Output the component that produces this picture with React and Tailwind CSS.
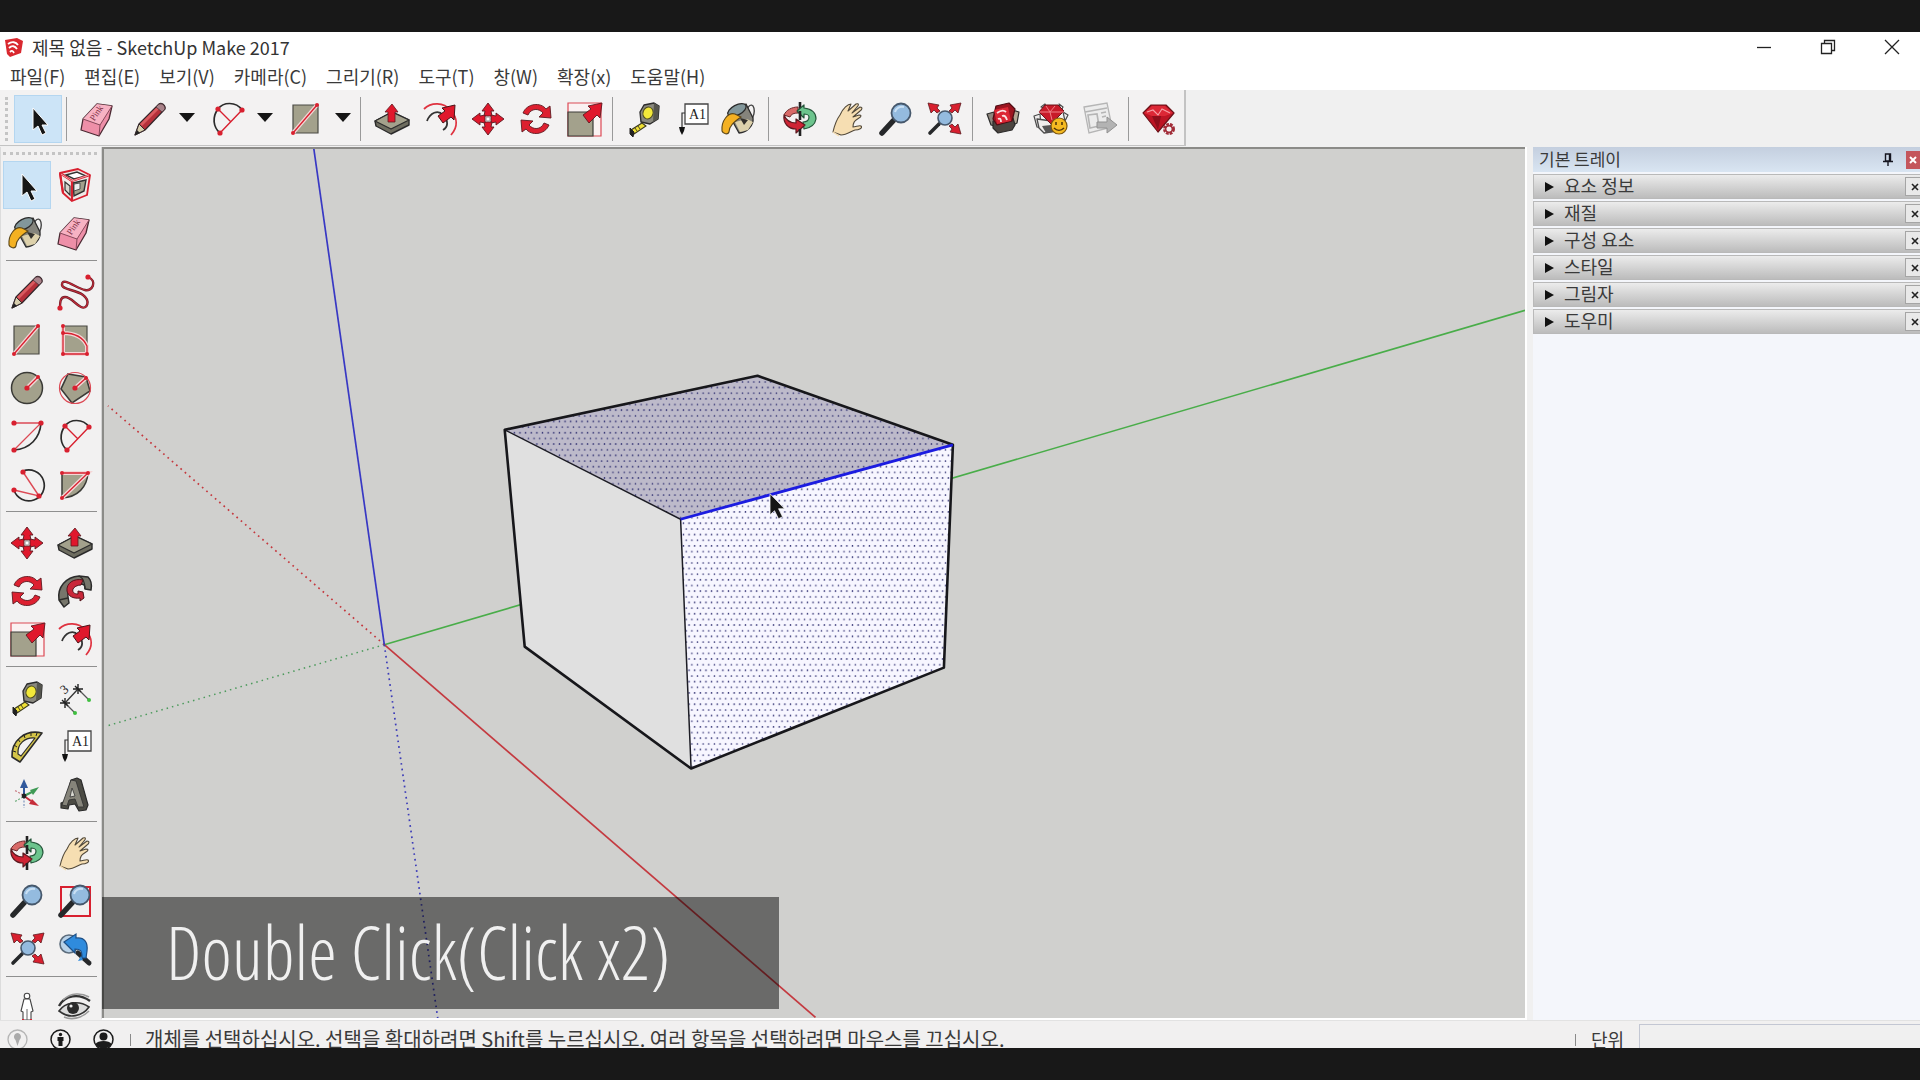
const RED = "#d8202f"
const TAUPE = "#a3a18c"
const INK = "#2b2b2b"

const Icon = ({ children }) => (
  <svg viewBox="0 0 48 48" className="h-12 w-12 shrink-0" fill="none" aria-hidden="true">
    {children}
  </svg>
)

const Node = ({ x, y }) => <circle cx={x} cy={y} r="2.6" fill={RED} />

const Link = ({ d }) => (
  <>
    <path d={d} stroke="#f4d6d6" strokeWidth="4" />
    <path d={d} stroke={RED} strokeWidth="1.3" />
  </>
)

const SelectIcon = () => (
  <Icon>
    <path d="M19 13v22l5-4 4 9 4-2-4-8h6z" fill="#161616" stroke="#fff" strokeWidth="1" />
  </Icon>
)

const EraserIcon = () => (
  <Icon>
    <path d="M23 9l15 2-3 13-10 17L7 35l2-11z" fill="#ee8fa8" stroke="#4b2a33" strokeWidth="1.3" strokeLinejoin="round" />
    <path d="M23 9l15 2-12 19-17-6z" fill="#f7b2c3" />
    <path d="M9 24l17 6-1 11M26 30l12-19" stroke="#87485a" strokeWidth="1" />
    <text x="19" y="26" fontSize="9" fontFamily="Liberation Serif, serif" fill="#7d3045" transform="rotate(-56 20 25)">
      Pink
    </text>
  </Icon>
)

const PencilIcon = () => (
  <Icon>
    <path d="M9 40l4-11L33 9c2-2 7 1 6 5L19 35z" fill="#b5303a" stroke="#33262a" strokeWidth="1.2" strokeLinejoin="round" />
    <path d="M14 29L33 10l2 2-19 19z" fill="#d95a5f" />
    <path d="M9 40l4-11 6 6z" fill="#d8cfae" stroke="#33262a" strokeWidth="1" />
    <path d="M9 40l2-5 3 3z" fill="#222" />
    <path d="M31 11c3-4 8-2 8 3l-3 3-6-5z" fill="#a9838a" stroke="#4a3439" strokeWidth="0.8" />
  </Icon>
)

const ArcTwoIcon = () => (
  <Icon>
    <path d="M38 15C32 6 19 7 14 14C8 22 9 32 16 38" stroke={INK} strokeWidth="1.7" />
    <path d="M38 15L16 38M14 14l13 13" stroke={RED} strokeWidth="1.4" />
    <Node x={14} y={14} />
    <Node x={38} y={15} />
    <Node x={16} y={38} />
  </Icon>
)

const RectIcon = () => (
  <Icon>
    <path d="M11 10h25v28H11z" fill={TAUPE} stroke="#4a4a44" strokeWidth="1.2" />
    <Link d="M11 38L35 10" />
    <circle cx="11" cy="38" r="2" fill={RED} />
    <circle cx="35" cy="10" r="2" fill={RED} />
  </Icon>
)

const PushIcon = () => (
  <Icon>
    <path d="M7 26l17-9 17 8v5L23 39 8 31z" fill="#6e6d60" stroke={INK} strokeWidth="1.4" strokeLinejoin="round" />
    <path d="M7 26l17-9 17 8-18 9z" fill={TAUPE} stroke={INK} strokeWidth="1.2" strokeLinejoin="round" />
    <path d="M24 9l6 8h-3v10h-7V17h-3z" fill="#e0182c" stroke="#5d1a20" strokeWidth="0.8" />
  </Icon>
)

const OffsetIcon = () => (
  <Icon>
    <path d="M8 14C15 7 28 7 34 15C42 23 42 32 35 40" stroke="#df3340" strokeWidth="1.8" />
    <path d="M11 26C14 18 22 14 27 20C33 26 32 32 27 35" stroke="#333" strokeWidth="1.8" />
    <path d="M39 10l-13 3 3 3-7 5 5 7 8-6 3 3z" fill="#e0182c" stroke="#4b1419" strokeWidth="1" />
  </Icon>
)

const MoveIcon = () => (
  <Icon>
    {[0, 90, 180, 270].map((angle) => (
      <path
        key={angle}
        transform={`rotate(${angle} 24 24)`}
        d="M24 8l6 8h-3l1 5h-8l1-5h-3z"
        fill="#e0182c"
        stroke="#5d1a20"
        strokeWidth="0.9"
      />
    ))}
    <circle cx="24" cy="24" r="2" fill="#fff" stroke="#777" strokeWidth="0.6" />
  </Icon>
)

const RotateIcon = () => (
  <Icon>
    {[0, 180].map((angle) => (
      <path
        key={angle}
        transform={`rotate(${angle} 24 24)`}
        d="M11 18C15 8 29 7 34 14l4-3 1 12-12-1 4-4C27 13 19 13 16 20z"
        fill="#dd2030"
        stroke="#5d1a20"
        strokeWidth="0.9"
        strokeLinejoin="round"
      />
    ))}
  </Icon>
)

const ScaleIcon = () => (
  <Icon>
    <path d="M8 8h33v33H8z" fill="#faf2f2" stroke="#dc4a55" strokeWidth="1.2" />
    <path d="M8 17h25v24H8z" fill={TAUPE} stroke="#3c3c38" strokeWidth="1.2" />
    <path d="M42 8l-14 3 3 3-8 6 6 8 8-8 3 3z" fill="#e0182c" stroke="#5d1a20" strokeWidth="0.9" />
  </Icon>
)

const TapeIcon = () => (
  <Icon>
    <path d="M20 17l4-7 10-2 5 3-1 13-8 5-9-2z" fill="#8a897f" stroke={INK} strokeWidth="1.4" strokeLinejoin="round" />
    <path d="M34 8l5 3-1 13-5 3z" fill="#55554e" />
    <ellipse cx="28" cy="18" rx="5" ry="6" fill="#f2e83a" stroke="#4e4c1e" strokeWidth="1" transform="rotate(20 28 18)" />
    <path d="M22 28l4 3-12 8-3-4z" fill="#efe034" stroke="#3d3b1c" strokeWidth="1.1" />
    <path d="M10 33l4 4-1 5-3-3z" fill="#222" stroke="#222" />
    <path d="M15 33l2 3M18 31l2 3" stroke="#222" strokeWidth="0.8" />
  </Icon>
)

const TextIcon = () => (
  <Icon>
    <path d="M17 9h23v20H17z" fill="#fff" stroke="#444" strokeWidth="1.3" />
    <path d="M17 18h-3v15" stroke="#333" strokeWidth="1.2" />
    <path d="M11 32h6l-1 4-2 4-2-4z" fill="#111" />
    <text x="21" y="24" fontSize="14" fontFamily="Liberation Serif, serif" fill="#222">
      A1
    </text>
  </Icon>
)

const PaintIcon = () => (
  <Icon>
    <ellipse cx="34" cy="18" rx="4" ry="8" stroke="#444" strokeWidth="1.4" transform="rotate(12 34 18)" />
    <path d="M12 18l18-9 7 14c1 7-6 15-14 15z" fill="#85847c" stroke={INK} strokeWidth="1.3" strokeLinejoin="round" />
    <path d="M19 27l12-3 6 3-5 8-8 2z" fill="#ddd1ab" />
    <path d="M24 23l8 2-4 5z" fill="#33302c" />
    <ellipse cx="21" cy="15" rx="10" ry="5" fill="#82979b" stroke={INK} strokeWidth="1.3" transform="rotate(-28 21 15)" />
    <path d="M19 19C12 17 5 26 6 36c1 3 6 4 7 1 0-6 5-10 12-15z" fill="#f4b122" stroke="#5a461a" strokeWidth="1.1" />
  </Icon>
)

const OrbitIcon = () => (
  <Icon>
    <path d="M24 7v12" stroke="#222" strokeWidth="2.6" />
    <path d="M8 20c2-5 8-8 14-8v6c-4 0-7 1-8 4z" fill="#d86a68" stroke="#6b2b2c" strokeWidth="1" />
    <path d="M21 16l7-6v3c8 1 12 5 12 11-1 6-6 9-12 10l-1-7c4 0 6-2 6-5 0-2-3-3-5-3v4z" fill="#6cc48d" stroke="#24563a" strokeWidth="1.2" strokeLinejoin="round" />
    <path d="M8 20c-1 8 4 14 12 14v4l9-8-9-6v4c-6 0-10-3-12-8z" fill="#cf2434" stroke="#5d1a20" strokeWidth="1.2" strokeLinejoin="round" />
    <path d="M24 16v9M24 34v7" stroke="#222" strokeWidth="2.6" />
  </Icon>
)

const HandIcon = () => (
  <Icon>
    <path
      d="M9 37c2-9 4-13 7-17C19 13 24 9 27 9l-3 7 8-7c3-1 3 1 1 3l-5 6 8-6c3 0 2 3 0 4l-7 6 6-2c3 0 2 2 0 3-5 3-6 5-6 9 3 0 6-2 8-1 2 2-2 4-6 4-4 1-8 5-14 5z"
      fill="#f6deb2"
      stroke="#52493a"
      strokeWidth="1.1"
      strokeLinejoin="round"
    />
    <path d="M9 37l6 4" stroke="#f6deb2" strokeWidth="1.5" />
  </Icon>
)

const ZoomGlass = () => (
  <>
    <path d="M21 26L10 38" stroke="#26282a" strokeWidth="5.5" strokeLinecap="round" />
    <circle cx="29" cy="18" r="9.5" fill="#94bbdf" stroke="#46586c" strokeWidth="1.8" />
    <path d="M23 17c1-4 5-6 9-5" stroke="#c9e0f4" strokeWidth="2" />
  </>
)

const ZoomIcon = () => (
  <Icon>
    <ZoomGlass />
  </Icon>
)

const ZoomWindowIcon = () => (
  <Icon>
    <path d="M10 10h29v29H10z" stroke={RED} strokeWidth="2" />
    <ZoomGlass />
  </Icon>
)

const ExtentsIcon = () => (
  <Icon>
    <path d="M19 29L10 38" stroke="#26282a" strokeWidth="3.6" strokeLinecap="round" />
    <circle cx="25" cy="23" r="7" fill="#94bbdf" stroke="#46586c" strokeWidth="1.6" />
    <path
      d="M8 8l11 2-2 3 3 3-3 2-3-3-3 3zM41 8l-11 2 2 3-3 3 3 2 3-3 3 3zM41 39l-11-2 2-3-3-3 3-2 3 3 3-3z"
      fill="#d8202f"
      stroke="#5d1a20"
      strokeWidth="0.8"
    />
  </Icon>
)

const PreviousIcon = () => (
  <Icon>
    <circle cx="18" cy="19" r="9" fill="#b9d2e8" stroke="#5c6c7c" strokeWidth="1.6" />
    <path d="M27 28l11 10" stroke="#26282a" strokeWidth="5" strokeLinecap="round" />
    <path d="M13 17l12-8v4c9-1 12 5 11 13l-1 7h-4c0-7-1-9-7-9v4z" fill="#2f8bdd" stroke="#1d4f86" strokeWidth="1.2" />
    <path d="M27 36l3-5 2 4z" fill="#2f8bdd" />
  </Icon>
)

const WarehouseIcon = () => (
  <Icon>
    <path d="M7 19l7-2 4 15-7-2z" fill="#8f877e" stroke={INK} strokeWidth="1.2" strokeLinejoin="round" />
    <path d="M32 15l7 2-2 11-6 3z" fill="#b3a795" stroke={INK} strokeWidth="1.2" strokeLinejoin="round" />
    <path d="M13 26l20-3 2 7-3 5-14 3-5-5z" fill="#4b4540" stroke={INK} strokeWidth="1.2" strokeLinejoin="round" />
    <path d="M16 11l13-3 6 6-3 12-15 4-4-6z" fill="#9c1420" stroke="#4f0d14" strokeWidth="1.2" strokeLinejoin="round" />
    <path d="M14 15l14-3 3 14-14 3z" fill="#dc2735" />
    <path d="M17 18c4-3 7-3 9-1M22 21c3-1 4 1 5 4M18 24c2-1 3 0 3 3" stroke="#fbe4e5" strokeWidth="1.8" />
  </Icon>
)

const ExtensionStoreIcon = () => (
  <Icon>
    <path d="M6 21l6-2 1 14-4-1zM13 12l4-3 2 5zM31 9l4 3-2 4zM35 17l5 3-3 6z" fill="#efeded" stroke="#4c4c4c" strokeWidth="1.2" strokeLinejoin="round" />
    <path d="M9 24l22 3-2 9-13 2-5-5z" fill="#efeded" stroke="#4c4c4c" strokeWidth="1.3" strokeLinejoin="round" />
    <path d="M14 31l4 7 7-1-2-7z" fill="#555" />
    <path d="M11 17l6-7h13l6 6-13 13z" fill="#c81a29" stroke="#6b1219" strokeWidth="1" />
    <path d="M11 17h25M18 11l4 6 5-6M22 17l2 8" stroke="#f08087" strokeWidth="1" />
    <circle cx="31" cy="31" r="8" fill="#f5ba21" stroke="#7a5510" strokeWidth="1.2" />
    <path d="M28 27v3M34 27v3M26 33c3 3 7 3 10 0" stroke="#4a3208" strokeWidth="1.5" />
  </Icon>
)

const LayoutIcon = () => (
  <Icon>
    <path d="M8 12l23-4 5 24-23 6z" fill="#ececec" stroke="#b5b5b5" strokeWidth="1.3" />
    <path d="M9 17l22-4M12 20l9-1 2 12-9 2zM25 18l5-1M26 22l4-1" stroke="#b5b5b5" strokeWidth="1.6" />
    <path d="M21 27h10v-5l10 8-10 8v-5H21z" fill="#b3b3b3" stroke="#929292" strokeWidth="1" />
  </Icon>
)

const RubyIcon = () => (
  <Icon>
    <path d="M7 18l8-8h15l8 8-16 19z" fill="#bd1524" stroke="#6b1219" strokeWidth="1.2" strokeLinejoin="round" />
    <path d="M8 18l8-7h13l8 7-8 3H16z" fill="#dc2836" />
    <path d="M16 21l6 14 3-14z" fill="#8e0f1b" />
    <path d="M11 17l6-2 5 5 4-6 8 4" stroke="#f6a0a5" strokeWidth="1.1" />
    <circle cx="33" cy="34" r="4.5" fill="#f2f1f1" stroke="#a22d39" strokeWidth="3" strokeDasharray="2.6 1" />
    <circle cx="33" cy="34" r="3.4" stroke="#a22d39" strokeWidth="1.6" />
  </Icon>
)

const ComponentIcon = () => (
  <Icon>
    <path d="M9 12l18-4 12 6-3 20-15 6-9-8z" fill="#efebe8" stroke={RED} strokeWidth="1.8" strokeLinejoin="round" />
    <path d="M15 14l11-3 9 4-12 3z" fill="#fff" stroke="#333" strokeWidth="1.4" />
    <path d="M14 21l5 4v9l-5-5z" fill="#d9d5ce" stroke="#333" strokeWidth="1.2" />
    <path d="M22 22l13-3-2 11-10 5z" fill="#a3a18c" stroke="#333" strokeWidth="1.4" />
    <path d="M23 23l6-1v6l-6 2z" fill="#eee" stroke="#444" strokeWidth="0.9" />
    <path d="M9 12l12 8 18-6M21 20v20M9 12l3 20" stroke={RED} strokeWidth="2.2" strokeLinejoin="round" />
    <path d="M10 13l11 7 17-6" stroke="#fff" strokeWidth="0.6" />
  </Icon>
)

const FreehandIcon = () => (
  <Icon>
    <path
      d="M37 9C47 13 41 24 34 22C25 20 12 9 11 16C10 22 24 21 32 27C40 33 36 42 30 39C24 36 20 29 14 29C9 29 9 35 9 40"
      stroke="#6a1f28"
      strokeWidth="2.4"
    />
    <path
      d="M37 9C47 13 41 24 34 22C25 20 12 9 11 16C10 22 24 21 32 27C40 33 36 42 30 39C24 36 20 29 14 29C9 29 9 35 9 40"
      stroke="#c02a38"
      strokeWidth="1.2"
    />
    <Node x={37} y={9} />
    <Node x={9} y={40} />
  </Icon>
)

const RotatedRectIcon = () => (
  <Icon>
    <path d="M12 10h24v28H12z" fill={TAUPE} stroke="#4a4a44" strokeWidth="1.2" />
    <Link d="M12 10v28h24V30C32 21 24 17 12 17" />
    <circle cx="12" cy="10" r="2" fill={RED} />
    <circle cx="12" cy="17" r="2" fill={RED} />
    <circle cx="12" cy="38" r="2" fill={RED} />
    <circle cx="36" cy="38" r="2" fill={RED} />
  </Icon>
)

const CircleIcon = () => (
  <Icon>
    <circle cx="24" cy="24" r="15.5" fill={TAUPE} stroke="#3a3a36" strokeWidth="1.5" />
    <Link d="M24 24L35 13" />
    <Node x={24} y={24} />
    <circle cx="35" cy="13" r="2" fill={RED} />
  </Icon>
)

const PolygonIcon = () => (
  <Icon>
    <path d="M17 10l18 3 4 14-18 12-11-14z" fill={TAUPE} stroke="#3a3a36" strokeWidth="1.6" />
    <circle cx="24" cy="24" r="15.5" stroke="#dc4a55" strokeWidth="1.2" />
    <Link d="M24 24L35 14" />
    <Node x={24} y={24} />
    <circle cx="35" cy="14" r="2" fill={RED} />
  </Icon>
)

const ArcIcon = () => (
  <Icon>
    <path d="M38 11C37 26 27 37 11 38" stroke={INK} strokeWidth="1.7" />
    <path d="M11 11h27L11 38" stroke="#dc4a55" strokeWidth="1.3" />
    <Node x={11} y={11} />
    <Node x={38} y={11} />
    <Node x={11} y={38} />
  </Icon>
)

const ArcThreeIcon = () => (
  <Icon>
    <path d="M20 11A15.5 15.5 0 1 1 11 30" stroke={INK} strokeWidth="1.7" />
    <path d="M20 12l16 24-25-6" stroke="#dc4a55" strokeWidth="1.4" />
    <Node x={20} y={12} />
    <Node x={11} y={30} />
    <Node x={36} y={36} />
  </Icon>
)

const PieIcon = () => (
  <Icon>
    <path d="M11 13h26C36 27 27 37 11 38z" fill={TAUPE} stroke="#3a3a36" strokeWidth="1.5" />
    <Link d="M11 13h26L11 38" />
    <circle cx="11" cy="13" r="2" fill={RED} />
    <circle cx="37" cy="13" r="2" fill={RED} />
    <circle cx="11" cy="38" r="2" fill={RED} />
  </Icon>
)

const FollowIcon = () => (
  <Icon>
    <path
      d="M8 33C6 20 15 10 28 9l9 1c3 3 4 8 3 13l-6-1c0-4-1-5-5-5-8 0-13 6-12 13l1 6-5 4z"
      fill="#77766b"
      stroke={INK}
      strokeWidth="1.5"
      strokeLinejoin="round"
    />
    <path d="M28 9c4 2 6 6 6 13M8 33l9-2" stroke="#2e2e2a" strokeWidth="1.3" />
    <path
      d="M32 13C23 11 15 16 16 24c1 5 6 8 13 7v3l4-3-1-6-5-1v3c-4 0-6-2-5-5 1-2 4-4 8-4z"
      fill="#c9283a"
      stroke="#53141b"
      strokeWidth="1"
      strokeLinejoin="round"
    />
  </Icon>
)

const DimensionIcon = () => (
  <Icon>
    <path d="M14 29L27 15" stroke="#333" strokeWidth="1.3" />
    <path d="M27 15l11 11M14 29l10 10" stroke="#555" strokeWidth="1.3" />
    <path d="M22 15h10M27 10v10M24 12l6 6M9 29h10M14 24v10M11 26l6 6" stroke="#222" strokeWidth="1.4" />
    <circle cx="38" cy="26" r="2" fill="#3fbf3f" />
    <circle cx="24" cy="39" r="2" fill="#3fbf3f" />
    <text x="10" y="19" fontSize="13" fontFamily="Liberation Serif, serif" fill="#222" transform="rotate(-40 14 15)">
      3
    </text>
  </Icon>
)

const ProtractorIcon = () => (
  <Icon>
    <path d="M39 11C22 7 8 19 9 35l8 5z" fill="#d5c548" stroke={INK} strokeWidth="1.6" strokeLinejoin="round" />
    <path d="M32 16C22 15 14 22 15 32l3 2z" fill="#f2f1f1" stroke={INK} strokeWidth="1.2" strokeLinejoin="round" />
    <path d="M10 29l3 1M11 23l3 2M15 17l2 3M21 13l1 3M28 11v3M34 11l-1 3" stroke="#222" strokeWidth="1" />
  </Icon>
)

const AxesIcon = () => (
  <Icon>
    <path d="M21 26V16" stroke="#31599c" strokeWidth="2" />
    <path d="M21 9l4 9h-8z" fill="#31599c" />
    <path d="M21 26l8-4" stroke="#3f9a55" strokeWidth="2" />
    <path d="M36 17l-6 8-3-5z" fill="#3f9a55" />
    <path d="M21 26l7 5" stroke="#c62d3a" strokeWidth="2" />
    <path d="M36 36l-10-2 3-5z" fill="#c62d3a" />
    <path d="M21 27v11" stroke="#7f96bd" strokeWidth="1.2" strokeDasharray="2 1.5" />
    <path d="M20 27l-9 5" stroke="#6fae7d" strokeWidth="1.2" strokeDasharray="2 1.5" />
    <path d="M20 25l-9-5" stroke="#c97a82" strokeWidth="1.2" strokeDasharray="2 1.5" />
    <circle cx="21" cy="26" r="2.4" fill="#222" />
  </Icon>
)

const SolidTextIcon = () => (
  <Icon>
    <path
      d="M20 10l6-2 4 2 7 25-2 5-7 1-4-7-6 1-1 4-7-1v-5l5-2z"
      fill="#4c4b44"
      stroke={INK}
      strokeWidth="1.2"
      strokeLinejoin="round"
    />
    <path d="M20 10l5 1 8 26h-6l-3-8-6 1-2 6-5-1z" fill="#86847a" stroke="#333" strokeWidth="0.9" />
    <path d="M21 18l3 8-5 1z" fill="#d8d7d0" stroke="#333" strokeWidth="0.8" />
  </Icon>
)

const PersonIcon = () => (
  <Icon>
    <circle cx="24" cy="12" r="2.8" fill="#fff" stroke="#444" strokeWidth="1.1" />
    <path d="M21 15h6l3 12-2 1v8h-8v-8l-2-1z" fill="#fff" stroke="#444" strokeWidth="1.1" strokeLinejoin="round" />
    <path d="M24 25v11" stroke="#666" />
    <path d="M20 35v2M28 35v2" stroke={RED} strokeWidth="2" />
  </Icon>
)

const LookIcon = () => (
  <Icon>
    <path d="M8 22C14 11 28 9 39 17" stroke="#333" strokeWidth="2.4" />
    <path d="M12 16C20 8 31 9 38 13" stroke="#999" strokeWidth="1.6" />
    <path d="M8 27C14 18 28 16 38 23C31 33 18 34 11 29z" fill="#dcdcdc" stroke="#333" strokeWidth="1.6" />
    <circle cx="22" cy="24" r="6" fill="#2b2b2b" />
    <circle cx="20" cy="22" r="1.6" fill="#eee" />
    <path d="M13 33c7 3 17 2 25-6" stroke="#999" strokeWidth="1.6" />
  </Icon>
)

const MENUS = ["파일(F)", "편집(E)", "보기(V)", "카메라(C)", "그리기(R)", "도구(T)", "창(W)", "확장(x)", "도움말(H)"]

const TRAY_PANELS = ["요소 정보", "재질", "구성 요소", "스타일", "그림자", "도우미"]

const SPLIT_TOOLS = [
  ["연필", PencilIcon],
  ["호", ArcTwoIcon],
  ["직사각형", RectIcon],
]

const TOP_GROUPS = [
  [
    ["밀기/끌기", PushIcon],
    ["오프셋", OffsetIcon],
    ["이동", MoveIcon],
    ["회전", RotateIcon],
    ["배율", ScaleIcon],
  ],
  [
    ["줄자", TapeIcon],
    ["텍스트", TextIcon],
    ["페인트통", PaintIcon],
  ],
  [
    ["궤도", OrbitIcon],
    ["이동 보기", HandIcon],
    ["확대/축소", ZoomIcon],
    ["범위 확대", ExtentsIcon],
  ],
  [
    ["3D Warehouse", WarehouseIcon],
    ["Extension Warehouse", ExtensionStoreIcon],
    ["LayOut", LayoutIcon],
  ],
  [["확장 관리자", RubyIcon]],
]

const SIDE_GROUPS = [
  [
    ["선택", SelectIcon],
    ["구성 요소 만들기", ComponentIcon],
    ["페인트통", PaintIcon],
    ["지우개", EraserIcon],
  ],
  [
    ["연필", PencilIcon],
    ["자유곡선", FreehandIcon],
    ["직사각형", RectIcon],
    ["회전된 직사각형", RotatedRectIcon],
    ["원", CircleIcon],
    ["다각형", PolygonIcon],
    ["호", ArcIcon],
    ["2점 호", ArcTwoIcon],
    ["3점 호", ArcThreeIcon],
    ["파이", PieIcon],
  ],
  [
    ["이동", MoveIcon],
    ["밀기/끌기", PushIcon],
    ["회전", RotateIcon],
    ["따라가기", FollowIcon],
    ["배율", ScaleIcon],
    ["오프셋", OffsetIcon],
  ],
  [
    ["줄자", TapeIcon],
    ["치수", DimensionIcon],
    ["각도기", ProtractorIcon],
    ["텍스트", TextIcon],
    ["축", AxesIcon],
    ["3D 텍스트", SolidTextIcon],
  ],
  [
    ["궤도", OrbitIcon],
    ["이동 보기", HandIcon],
    ["확대/축소", ZoomIcon],
    ["창 확대", ZoomWindowIcon],
    ["범위 확대", ExtentsIcon],
    ["이전", PreviousIcon],
  ],
  [
    ["카메라 배치", PersonIcon],
    ["둘러보기", LookIcon],
  ],
]

const ToolButton = ({ label, icon: Glyph, active }) => (
  <button
    type="button"
    aria-label={label}
    aria-pressed={active}
    className={
      active
        ? "h-12 w-12 shrink-0 bg-[#cce4f7] outline outline-1 -outline-offset-1 outline-[#b4d6f0]"
        : "h-12 w-12 shrink-0 hover:bg-[#e2eef8]"
    }
  >
    <Glyph />
  </button>
)

const Divider = () => <div className="mr-[7px] ml-1 h-11 w-px shrink-0 bg-[#9a9a9a]" />

const TitleBar = () => (
  <header className="bg-white">
    <div className="flex h-[31px] items-center pb-[2px]">
      <svg viewBox="0 0 20 20" className="mr-2 ml-1 h-5 w-5" aria-hidden="true">
        <path d="M1 3l12-2 6 3-2 12-11 4-3-3z" fill="#d9282f" />
        <path d="M4 7c4-3 8-2 10 1M5 11c3-3 6-2 8 1M6 15c2-2 3-1 4 1" stroke="#fff" strokeWidth="1.8" fill="none" />
      </svg>
      <h1 className="text-[18px] leading-6 text-[#333]">제목 없음 - SketchUp Make 2017</h1>
      <div className="ml-auto flex gap-2">
        <button type="button" aria-label="최소화" className="flex h-7 w-14 items-center justify-center">
          <svg viewBox="0 0 16 16" className="h-4 w-4">
            <path d="M1 8.5h14" stroke="#222" strokeWidth="1.3" />
          </svg>
        </button>
        <button type="button" aria-label="이전 크기로" className="flex h-7 w-14 items-center justify-center">
          <svg viewBox="0 0 16 16" className="h-4 w-4" fill="none" stroke="#222" strokeWidth="1.3">
            <path d="M1.5 4.5h10v10h-10zM4.5 4.5v-3h10v10h-3" />
          </svg>
        </button>
        <button type="button" aria-label="닫기" className="flex h-7 w-14 items-center justify-center">
          <svg viewBox="0 0 16 16" className="h-4 w-4" stroke="#222" strokeWidth="1.3">
            <path d="M1 1l14 14M15 1L1 15" />
          </svg>
        </button>
      </div>
    </div>
    <nav className="flex h-[27px] items-center gap-[19px] pb-px pl-[10px]">
      {MENUS.map((menu) => (
        <button key={menu} type="button" className="text-[18px] leading-6 whitespace-nowrap text-[#3a3a3a]">
          {menu}
        </button>
      ))}
    </nav>
  </header>
)

const TopToolbar = () => (
  <div className="flex h-[57px] bg-[#f0f0f0] pb-px">
    <div className="flex items-center border-r-2 border-b border-[#c3c3c3] bg-[#f3f2f2] pt-[3px]">
      <div className="mr-[6px] ml-[5px] h-11 border-l-3 border-dotted border-[#c4c4c4]" />
      <ToolButton label="선택" icon={SelectIcon} active />
      <Divider />
      <div className="flex gap-1">
        <ToolButton label="지우개" icon={EraserIcon} />
        {SPLIT_TOOLS.map(([label, icon]) => (
          <div key={label} className="flex">
            <ToolButton label={label} icon={icon} />
            <button type="button" aria-label={`${label} 더 보기`} className="flex w-[26px] items-center justify-center pb-1">
              <svg viewBox="0 0 16 9" className="h-[9px] w-4" aria-hidden="true">
                <path d="M0 0h16L8 9z" fill="#151515" />
              </svg>
            </button>
          </div>
        ))}
      </div>
      {TOP_GROUPS.map((group, i) => (
        <div key={i} className="flex items-center">
          <Divider />
          {group.map(([label, icon]) => (
            <ToolButton key={label} label={label} icon={icon} />
          ))}
        </div>
      ))}
    </div>
  </div>
)

const SideToolbar = () => (
  <aside className="min-h-0 w-[101px] shrink-0 overflow-hidden border-l border-[#dcdcdc] bg-[#f2f1f1] pl-[2px]">
    <div className="mt-[5px] mr-1 mb-[6px] border-t-3 border-dotted border-[#c4c4c4]" />
    {SIDE_GROUPS.map((group, i) => (
      <div key={i}>
        {i > 0 && <div className="mt-[3px] mr-1 mb-[7px] ml-[3px] h-px bg-[#8f8f8f]" />}
        <div className="grid w-24 grid-cols-2">
          {group.map(([label, icon]) => (
            <ToolButton key={label} label={label} icon={icon} active={label === "선택"} />
          ))}
        </div>
      </div>
    ))}
  </aside>
)

const Viewport = () => (
  <main className="relative min-w-0 flex-1 border-t-2 border-l-2 border-[#8b8b88] bg-[#d0d0ce]">
    <svg viewBox="104 149 1422 870" preserveAspectRatio="xMinYMin slice" className="absolute inset-0 h-full w-full" fill="none">
      <defs>
        <pattern id="dots" width="5.64" height="11.32" patternUnits="userSpaceOnUse">
          <circle cx="1.4" cy="2.8" r="0.8" fill="#25256a" />
          <circle cx="4.2" cy="8.5" r="0.8" fill="#25256a" />
        </pattern>
      </defs>

      {/* Axes */}
      <path d="M384.5 645L1526 310.5" stroke="#49ad49" strokeWidth="1.6" />
      <path d="M384.5 645L108 726" stroke="#4c9a5c" strokeWidth="1.5" strokeDasharray="1.5 4" />
      <path d="M384.5 645L816 1018" stroke="#c43a40" strokeWidth="1.7" />
      <path d="M384.5 645L108 406" stroke="#c4383e" strokeWidth="1.7" strokeDasharray="1.7 4" />
      <path d="M384.5 645L314 149" stroke="#3838c4" strokeWidth="1.7" />
      <path d="M384.5 645L438 1019" stroke="#3c3cb8" strokeWidth="1.7" strokeDasharray="1.7 4" />

      {/* Box */}
      <path d="M505 430L681 519.5L691.5 769L525 647z" fill="#e0e0e0" />
      <path d="M505 430L758 376L953.5 445L681 519.5z" fill="#bdbaca" />
      <path d="M681 519.5L953.5 445L944.5 668L691.5 769z" fill="#f7f6ff" />
      <path d="M505 430L758 376L953.5 445L944.5 668L691.5 769L681 519.5z" fill="url(#dots)" />
      <path d="M505 430L681 519.5L691.5 769" stroke="#1c1c24" strokeWidth="1.5" />
      <path
        d="M505 430L758 376L953.5 445L944.5 668L691.5 769L525 647z"
        stroke="#17171b"
        strokeWidth="2.6"
        strokeLinejoin="round"
      />
      <path d="M681 519.5L953.5 445" stroke="#1c1ce0" strokeWidth="2.8" />

      {/* Pointer */}
      <path d="M770.5 494v21l4.5-4 4 8 4-2-4-8h6z" fill="#161616" stroke="#fff" strokeWidth="0.7" />
    </svg>
    <div className="absolute bottom-[9px] -left-[2px] flex h-28 w-[677px] max-w-full items-center bg-black/49 pb-1 pl-16">
      <p className="font-['Open_Sans_Condensed_Light','Roboto_Condensed','Liberation_Sans_Narrow',sans-serif] text-[73px] leading-none font-light whitespace-nowrap text-[#f0f0f0]">
        Double Click(Click x2)
      </p>
    </div>
  </main>
)

const Tray = () => (
  <aside className="flex w-[387px] shrink-0 flex-col overflow-hidden bg-[#f4f6fb]">
    <div className="mb-[2px] flex h-[25px] shrink-0 items-center bg-linear-to-b from-[#c4cfdf] to-[#d9e5f2] pl-[6px]">
      <h2 className="pb-[2px] text-[17px] leading-[22px] text-[#3a3a3a]">기본 트레이</h2>
      <button type="button" aria-label="고정" className="mr-3 ml-auto">
        <svg viewBox="0 0 12 14" className="h-[14px] w-3" fill="none" stroke="#15151f" strokeWidth="1.4">
          <path d="M3.5 1h5v7h-5zM1 8.5h10M6 8.5V13M7.5 1v7" />
        </svg>
      </button>
      <button type="button" aria-label="트레이 닫기" className="flex h-[18px] w-[14px] items-center justify-center bg-[#c4565c]">
        <svg viewBox="0 0 8 8" className="h-2 w-2" stroke="#fff" strokeWidth="2">
          <path d="M1 1l6 6M7 1L1 7" />
        </svg>
      </button>
    </div>
    <div className="flex flex-col gap-[2px]">
      {TRAY_PANELS.map((panel) => (
        <div
          key={panel}
          className="flex h-[25px] items-center border border-r-0 border-[#b9b9b9] bg-linear-to-b from-[#ececec] to-[#bcbcbc]"
        >
          <button type="button" className="flex flex-1 items-center gap-[10px] pl-[11px] text-[18px] leading-6 text-[#3a3a3a]">
            <svg viewBox="0 0 9 10" className="h-[10px] w-[9px]" aria-hidden="true">
              <path d="M0 0l9 5-9 5z" fill="#111" />
            </svg>
            <span className="pb-1">{panel}</span>
          </button>
          <button
            type="button"
            aria-label={`${panel} 닫기`}
            className="flex h-[19px] w-[15px] items-center justify-center border border-r-0 border-[#a5a5a5] bg-[#e9e9e9] pl-1"
          >
            <svg viewBox="0 0 8 8" className="h-2 w-2" stroke="#222" strokeWidth="1.6">
              <path d="M1 1l6 6M7 1L1 7" />
            </svg>
          </button>
        </div>
      ))}
    </div>
  </aside>
)

const StatusBar = () => (
  <footer className="flex h-7 shrink-0 items-start overflow-hidden border-t border-[#e2e2e2] bg-[#f1f0f0]">
    <div className="flex shrink-0 gap-[22px] pt-2 pl-[7px]">
      <svg viewBox="0 0 21 21" className="h-[21px] w-[21px]" fill="none" aria-hidden="true">
        <circle cx="10.5" cy="10.5" r="9.5" stroke="#b5b5b5" strokeWidth="1.3" />
        <path d="M10.5 17l-2-6c-3-3-1-7 2-7s5 4 2 7z" fill="#aaa" />
      </svg>
      <svg viewBox="0 0 21 21" className="h-[21px] w-[21px]" fill="none" aria-hidden="true">
        <circle cx="10.5" cy="10.5" r="9.5" stroke="#1b1b1b" strokeWidth="1.5" />
        <circle cx="10.5" cy="5.5" r="1.7" fill="#1b1b1b" />
        <path d="M7.5 8h6v4h-1v5h-4v-5h-1z" fill="#1b1b1b" />
      </svg>
      <svg viewBox="0 0 21 21" className="h-[21px] w-[21px]" fill="none" aria-hidden="true">
        <circle cx="10.5" cy="10.5" r="9.5" stroke="#1b1b1b" strokeWidth="1.5" />
        <circle cx="10.5" cy="7.5" r="4" fill="#1b1b1b" />
        <path d="M2.5 15c2-4 14-4 16 0-3 6-13 6-16 0z" fill="#1b1b1b" />
      </svg>
    </div>
    <div className="mt-[13px] mr-[14px] ml-4 h-3 w-px shrink-0 bg-[#8a8a8a]" />
    <p className="truncate pt-[6px] text-[20px] leading-6 text-[#3a3a3a]">
      개체를 선택하십시오. 선택을 확대하려면 Shift를 누르십시오. 여러 항목을 선택하려면 마우스를 끄십시오.
    </p>
    <div className="ml-auto flex shrink-0 items-start">
      <div className="mt-[13px] h-3 w-px bg-[#8a8a8a]" />
      <label htmlFor="measure" className="pt-[6px] pr-[15px] pl-[15px] text-[18px] leading-6 text-[#3a3a3a]">
        단위
      </label>
      <input
        id="measure"
        type="text"
        className="mt-[3px] h-8 w-[281px] border border-r-0 border-[#c3c7d3] bg-[#f0f0f0] px-2 text-[18px]"
      />
    </div>
  </footer>
)

const App = () => {
  return (
    <div className="h-screen bg-[#181818] py-8 font-['Noto_Sans_CJK_KR',sans-serif]">
      <div className="flex h-full flex-col overflow-hidden bg-[#f0f0f0]">
        <TitleBar />
        <TopToolbar />
        <div className="flex min-h-0 flex-1">
          <SideToolbar />
          <div className="flex min-w-0 flex-1 border-r-2 border-b-2 border-l border-r-white border-b-white border-l-[#d4d4d4]">
            <Viewport />
          </div>
          <div className="w-[6px] shrink-0" />
          <Tray />
        </div>
        <StatusBar />
      </div>
    </div>
  )
}

export default App
